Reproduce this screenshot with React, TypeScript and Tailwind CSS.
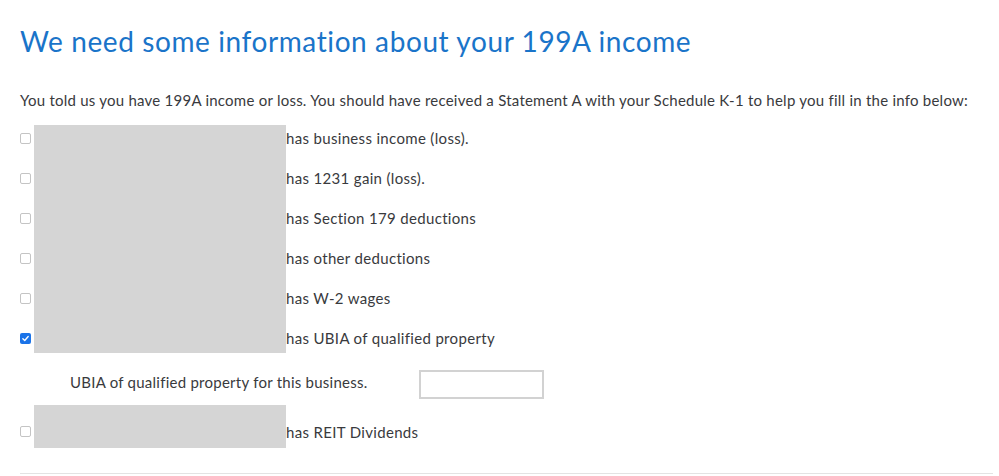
import { useState } from "react";

type Row = { label: string; checked: boolean };

const rows: Row[] = [
  { label: "has business income (loss).", checked: false },
  { label: "has 1231 gain (loss).", checked: false },
  { label: "has Section 179 deductions", checked: false },
  { label: "has other deductions", checked: false },
  { label: "has W-2 wages", checked: false },
  { label: "has UBIA of qualified property", checked: true },
];

function Box({ checked }: { checked: boolean }) {
  if (checked) {
    return (
      <span className="flex h-[11px] w-[11px] items-center justify-center rounded-[2px] bg-[#1a73e8]">
        <svg viewBox="0 0 12 12" className="h-[9px] w-[9px]" fill="none">
          <path d="M2.5 6.2 L5 8.6 L9.6 3.4" stroke="#fff" strokeWidth="1.8" strokeLinecap="round" strokeLinejoin="round" />
        </svg>
      </span>
    );
  }
  return <span className="block h-[11px] w-[11px] rounded-[2px] border border-[#c4c4c4] bg-white" />;
}

export default function App() {
  const [ubia, setUbia] = useState("");

  return (
    <main className="min-h-screen bg-white pl-5 pr-[6px] pt-[24px] font-['Lato',sans-serif] tracking-[0.33px] text-[#393a3d]">
      <h1 className="text-[28px] leading-[34px] tracking-[0.6px] text-[#1a74c9]">
        We need some information about your 199A income
      </h1>

      <p className="mt-[32px] text-[15px] leading-[20px] tracking-[0.24px]">
        You told us you have 199A income or loss. You should have received a Statement A with your Schedule K-1 to help you fill in the info below:
      </p>

      {/* first six businesses */}
      <div className="mt-[8px] grid grid-cols-[14px_252px_1fr] grid-rows-[repeat(6,40px)]">
        <div className="col-start-2 row-span-6 row-start-1 mb-[5px] mt-[7px] bg-[#d5d5d5]" />
        {rows.map((r, i) => (
          <div key={r.label} className="contents">
            <div className="col-start-1 flex items-center" style={{ gridRowStart: i + 1 }}>
              <Box checked={r.checked} />
            </div>
            <div className="col-start-3 flex items-center text-[15px]" style={{ gridRowStart: i + 1 }}>
              {r.label}
            </div>
          </div>
        ))}
      </div>

      {/* UBIA amount */}
      <div className="mt-[12px] flex items-center">
        <label className="w-[399px] pb-[4px] pl-[50px] text-[15px] tracking-[0.25px]">UBIA of qualified property for this business.</label>
        <input
          value={ubia}
          onChange={(e) => setUbia(e.target.value)}
          className="h-[29px] w-[125px] border-2 border-[#d2d2d2] bg-white px-2 text-[15px] outline-none"
        />
      </div>

      {/* REIT */}
      <div className="mt-[6px] flex h-[43px]">
        <div className="w-[14px] pt-[21px]">
          <Box checked={false} />
        </div>
        <div className="h-[43px] w-[252px] bg-[#d5d5d5]" />
        <span className="pt-[16px] text-[15px]">has REIT Dividends</span>
      </div>

      <div className="mt-[25px] border-t border-[#e3e3e3]" />
    </main>
  );
}
